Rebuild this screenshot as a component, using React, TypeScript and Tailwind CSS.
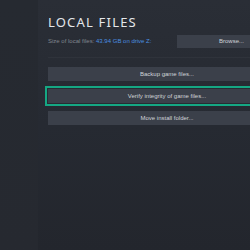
import React from 'react';

export default function App() {
  return (
    <div className="w-[250px] h-[250px] overflow-hidden flex bg-[#23262d]" style={{ fontFamily: '"Liberation Sans", Arial, sans-serif' }}>
      <div className="w-[38px] shrink-0 h-full bg-gradient-to-b from-[#262a31] to-[#262930]" />
      <div className="flex-1 h-full bg-gradient-to-b from-[#2a2e36] via-[#262a32] to-[#23262d] pl-[10px] overflow-hidden">
        <div className="w-[238px] shrink-0">
          <h1 className="pt-[14px] text-[13px] leading-[16px] tracking-[1.2px] text-[#e4e7ea] font-normal" style={{ fontFamily: '"Noto Sans", Arial, sans-serif' }}>LOCAL FILES</h1>
          <div className="mt-[5px] flex items-center justify-between">
            <p className="text-[6px] text-[#80868f] whitespace-nowrap">
              Size of local files: <span className="text-[#4a8fe0]">43.94 GB on drive Z:</span>
            </p>
            <button className="w-[109px] h-[13px] bg-[#3b404a] text-[6px] text-[#d0d4d9] flex items-center justify-center">
              Browse...
            </button>
          </div>
          <div className="mt-[9px] h-px bg-[#2f333b]" />
          <div className="mt-[9px] flex flex-col gap-[8px]">
            <button className="h-[14px] bg-[#3b404a] text-[6px] text-[#d0d4d9] flex items-center justify-center">
              Backup game files...
            </button>
            <button className="h-[14px] bg-[#3b404a] text-[6px] text-[#d0d4d9] flex items-center justify-center outline-2 outline-offset-1 outline-[#15a783]">
              Verify integrity of game files...
            </button>
            <button className="h-[14px] bg-[#3b404a] text-[6px] text-[#d0d4d9] flex items-center justify-center">
              Move install folder...
            </button>
          </div>
        </div>
      </div>
    </div>
  );
}
